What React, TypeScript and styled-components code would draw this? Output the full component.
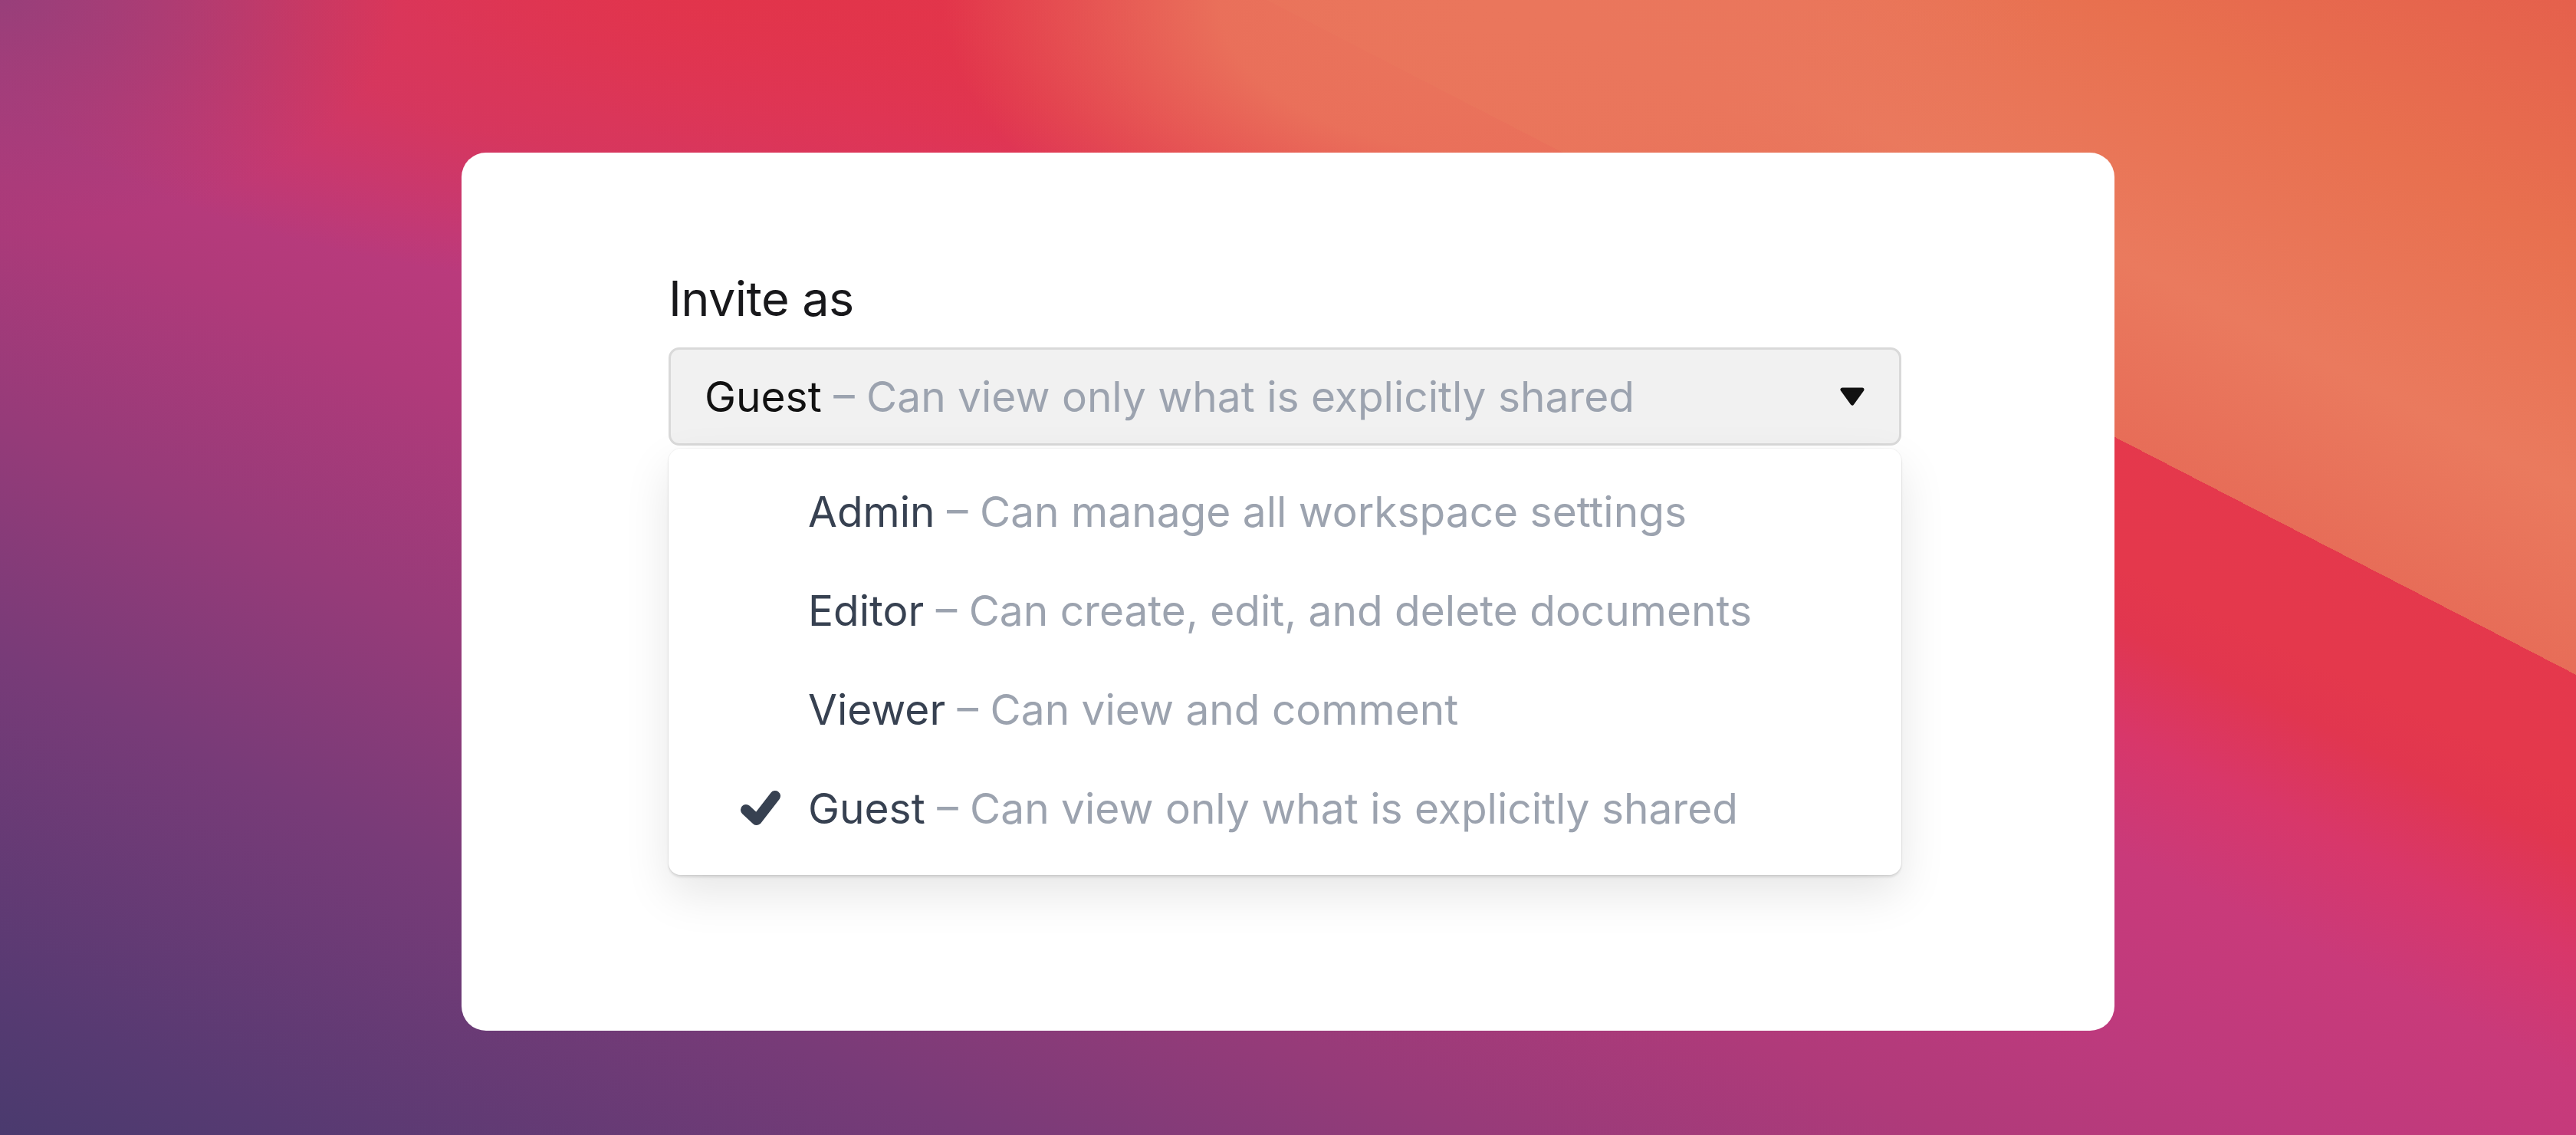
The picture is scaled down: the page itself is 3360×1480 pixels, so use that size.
import styled, {createGlobalStyle} from "styled-components";

const GlobalStyle = createGlobalStyle`
  html, body {
    margin: 0;
    padding: 0;
  }
  body {
    font-family: Inter, "Noto Sans", "Liberation Sans", sans-serif;
    -webkit-font-smoothing: antialiased;
  }
  * {
    box-sizing: border-box;
  }
`

// wallpaper: soft blobs on top of a hard-edged orange plane and a purple-to-red base
const Page = styled.div`
  min-height: 100vh;
  padding-top: 199px;
  background:
    radial-gradient(ellipse 520px 300px at 0 0, rgba(150, 63, 122, 0.95) 0%, rgba(150, 63, 122, 0.5) 50%, rgba(150, 63, 122, 0) 100%),
    radial-gradient(ellipse 720px 400px at 1950px 0, rgba(234, 118, 92, 1) 0%, rgba(234, 118, 92, 0.9) 50%, rgba(234, 118, 92, 0) 100%),
    radial-gradient(ellipse 1000px 380px at 950px 0, rgba(226, 52, 74, 0.95) 0%, rgba(226, 52, 74, 0.6) 55%, rgba(226, 52, 74, 0) 100%),
    linear-gradient(207.26deg, #e5604c 0%, #e8704f 10%, #ea7a5e 20%, #e76d58 27.4%, rgba(0, 0, 0, 0) 27.4%),
    linear-gradient(26deg, #4a3a6e 0%, #573a72 6%, #783b78 20%, #963b79 30%, #b03a7a 40%, #bd3a7d 47%, #c93a7a 55%, #d8376a 60%, #e1364f 64.5%, #e4384c 67%, #e5384c 76%, #e6604f 86%, #e5624c 100%);
`

const Card = styled.div`
  width: 2156px;
  margin: 0 auto;
  background: #ffffff;
  border-radius: 32px;
  padding: 154px 278px 203px 270px;
`

const Field = styled.div`
  display: flex;
  flex-direction: column;
`

const Label = styled.label`
  font-size: 63px;
  letter-spacing: -0.6px;
  line-height: 72px;
  color: #18181b;
  margin-bottom: 28px;
`

const SelectBox = styled.div`
  height: 128px;
  display: flex;
  align-items: center;
  justify-content: space-between;
  padding: 0 44px 0 44px;
  background: #f1f1f1;
  border: 3px solid #d9d9d9;
  border-radius: 14px;
  font-size: 55px;
  line-height: 1;
`

const Name = styled.span<{$tone: string}>`
  color: ${p => p.$tone};
`

const Desc = styled.span`
  color: #9ca3af;
`

const Menu = styled.div`
  margin-top: 4px;
  background: #ffffff;
  border-radius: 16px;
  padding: 18px 0 22px;
  box-shadow:
    0 0 0 1px rgba(0, 0, 0, 0.035),
    0 3px 3px rgba(0, 0, 0, 0.1),
    0 24px 60px rgba(0, 0, 0, 0.1);
`

const Option = styled.div`
  height: 129px;
  display: flex;
  align-items: center;
  gap: 34px;
  padding-left: 90px;
  font-size: 55px;
  line-height: 1;
`

const CheckSlot = styled.div`
  width: 58px;
  height: 52px;
  flex: none;
  display: flex;
`

const roles = [
    {name: "Admin", desc: "Can manage all workspace settings"},
    {name: "Editor", desc: "Can create, edit, and delete documents"},
    {name: "Viewer", desc: "Can view and comment"},
    {name: "Guest", desc: "Can view only what is explicitly shared"},
]

const Caret = () => (
    <svg width="34" height="26" viewBox="0 0 34 26">
        <path d="M4 4 H30 L17 22 Z" fill="#111111" stroke="#111111" strokeWidth="5" strokeLinejoin="round"/>
    </svg>
)

const Check = () => (
    <svg width="58" height="52" viewBox="0 0 58 52">
        <path d="M11 27 L25 40 L49 9" fill="none" stroke="#374151" strokeWidth="14" strokeLinecap="round" strokeLinejoin="round"/>
    </svg>
)

export default () => {
    const selected = "Guest";
    const current = roles.find(r => r.name === selected)!;

    return (
        <>
            <GlobalStyle/>
            <Page>
                <Card>
                    <Field>
                        <Label>Invite as</Label>
                        <SelectBox>
                            <span>
                                <Name $tone="#111111">{current.name}</Name>
                                <Desc> – {current.desc}</Desc>
                            </span>
                            <Caret/>
                        </SelectBox>
                        <Menu>
                            {roles.map(role => (
                                <Option key={role.name}>
                                    <CheckSlot>{role.name === selected && <Check/>}</CheckSlot>
                                    <span>
                                        <Name $tone="#374151">{role.name}</Name>
                                        <Desc> – {role.desc}</Desc>
                                    </span>
                                </Option>
                            ))}
                        </Menu>
                    </Field>
                </Card>
            </Page>
        </>
    );
}
